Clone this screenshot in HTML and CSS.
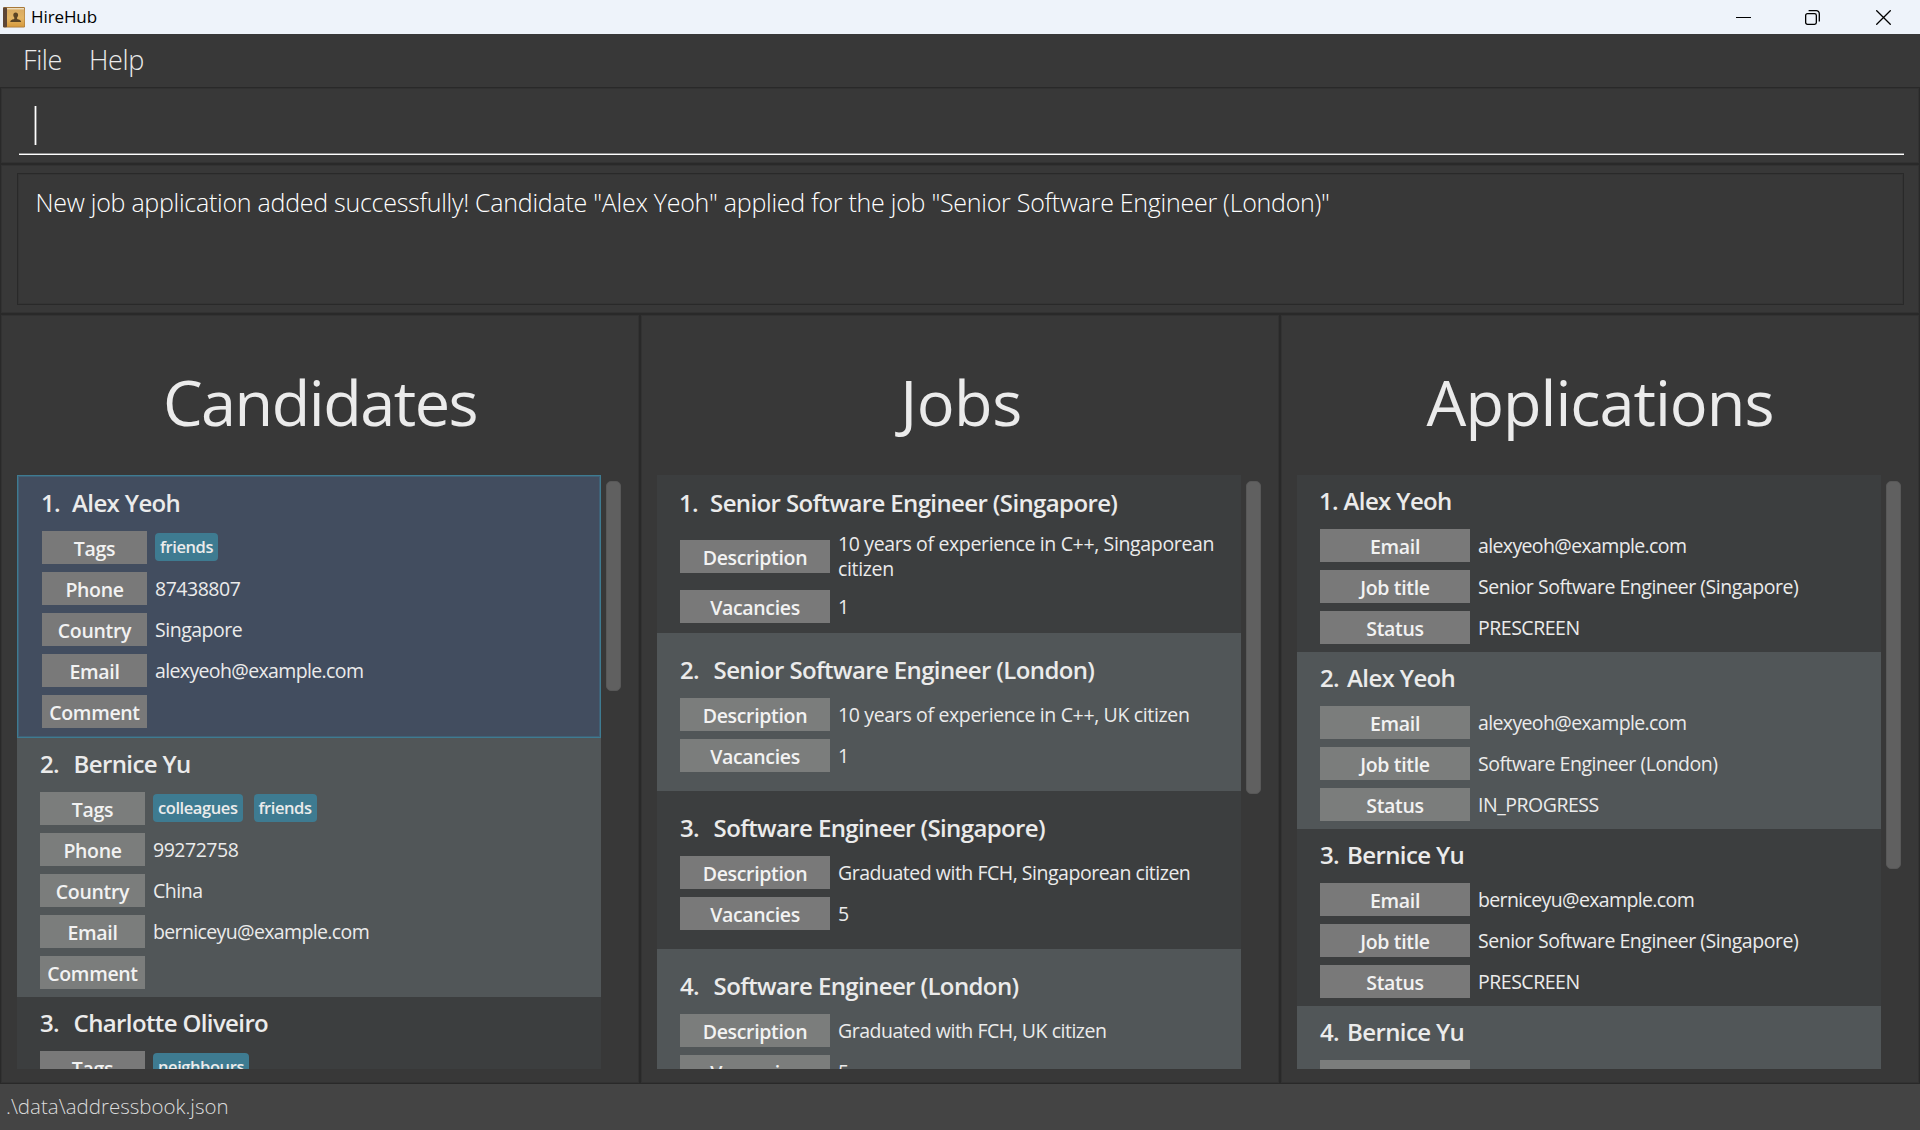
FILE: index.html
```html
<!DOCTYPE html>
<html lang="en">
<head>
<meta charset="utf-8">
<title>HireHub</title>
<link rel="stylesheet" href="styles.css">
</head>
<body>
<div class="window">
  <header class="titlebar">
    <svg class="app-icon" width="22" height="21" viewBox="0 0 22 21">
      <defs>
        <linearGradient id="cover" x1="0" y1="0" x2="0" y2="1">
          <stop offset="0" stop-color="#d9ab62"/>
          <stop offset=".5" stop-color="#e3b565"/>
          <stop offset="1" stop-color="#d79a3c"/>
        </linearGradient>
      </defs>
      <rect x="0" y="0" width="22" height="20.5" rx="1.2" fill="#a8793a"/>
      <rect x="4" y="1" width="17" height="2" fill="#ecdcbc"/>
      <rect x="4" y="2.4" width="17.4" height="17.3" fill="url(#cover)"/>
      <rect x="0" y="0.6" width="4" height="19.6" rx="1" fill="#5d4636"/>
      <path d="M12.7 5.4c1.6 0 2.4 1.1 2.4 2.6 0 1.200-.5 2-1 2.600v1.300c1.600.5 4 .9 4 3.100H7.300c0-2.200 2.400-2.600 4-3.100v-1.300c-.5-.6-1-1.400-1-2.600 0-1.500.8-2.600 2.400-2.600z" fill="#5b4424"/>
    </svg>
    <span class="app-name">HireHub</span>
    <div class="controls">
      <svg width="15" height="15" viewBox="0 0 15 15"><path d="M0 7.500H15" stroke="#000" fill="none"/></svg>
      <svg width="15" height="15" viewBox="0 0 15 15"><g fill="none" stroke="#000" stroke-width="1.300"><rect x=".65" y="3.650" width="10.700" height="10.700" rx="1.800"/><path d="M3.600.7H11.300a3 3 0 0 1 3 3V11.400"/></g></svg>
      <svg width="15" height="15" viewBox="0 0 15 15"><path d="M.3.300 14.700 14.700M14.700.300.3 14.700" stroke="#000" stroke-width="1.300" fill="none"/></svg>
    </div>
  </header>

  <nav class="menubar"><span>File</span><span>Help</span></nav>

  <section class="panel command"><div class="field"><i class="caret"></i></div></section>

  <section class="panel result"><div class="message">New job application added successfully! Candidate "Alex Yeoh" applied for the job "Senior Software Engineer (London)"</div></section>

  <main class="columns">
    <section class="panel column candidates">
      <h1>Candidates</h1>
      <div class="body">
        <div class="list">
          <article class="card selected">
            <h2><span>1.</span>Alex Yeoh</h2>
            <dl>
              <dt>Tags</dt><dd><b class="tag">friends</b></dd>
              <dt>Phone</dt><dd>87438807</dd>
              <dt>Country</dt><dd>Singapore</dd>
              <dt>Email</dt><dd class="mail">alexyeoh@example.com</dd>
              <dt>Comment</dt><dd></dd>
            </dl>
          </article>
          <article class="card">
            <h2><span>2.</span>Bernice Yu</h2>
            <dl>
              <dt>Tags</dt><dd><b class="tag">colleagues</b><b class="tag">friends</b></dd>
              <dt>Phone</dt><dd>99272758</dd>
              <dt>Country</dt><dd>China</dd>
              <dt>Email</dt><dd class="mail">berniceyu@example.com</dd>
              <dt>Comment</dt><dd></dd>
            </dl>
          </article>
          <article class="card">
            <h2><span>3.</span>Charlotte Oliveiro</h2>
            <dl>
              <dt>Tags</dt><dd><b class="tag">neighbours</b></dd>
            </dl>
          </article>
        </div>
        <div class="thumb"></div>
      </div>
    </section>

    <section class="panel column jobs">
      <h1>Jobs</h1>
      <div class="body">
        <div class="list">
          <article class="card">
            <h2><span>1.</span>Senior Software Engineer (Singapore)</h2>
            <dl>
              <dt>Description</dt><dd class="exp">10 years of experience in C++, Singaporean citizen</dd>
              <dt>Vacancies</dt><dd>1</dd>
            </dl>
          </article>
          <article class="card">
            <h2><span>2.</span>Senior Software Engineer (London)</h2>
            <dl>
              <dt>Description</dt><dd class="exp">10 years of experience in C++, UK citizen</dd>
              <dt>Vacancies</dt><dd>1</dd>
            </dl>
          </article>
          <article class="card">
            <h2><span>3.</span>Software Engineer (Singapore)</h2>
            <dl>
              <dt>Description</dt><dd>Graduated with FCH, Singaporean citizen</dd>
              <dt>Vacancies</dt><dd>5</dd>
            </dl>
          </article>
          <article class="card">
            <h2><span>4.</span>Software Engineer (London)</h2>
            <dl>
              <dt>Description</dt><dd>Graduated with FCH, UK citizen</dd>
              <dt>Vacancies</dt><dd>5</dd>
            </dl>
          </article>
        </div>
        <div class="thumb"></div>
      </div>
    </section>

    <section class="panel column applications">
      <h1>Applications</h1>
      <div class="body">
        <div class="list">
          <article class="card">
            <h2><span>1.</span>Alex Yeoh</h2>
            <dl>
              <dt>Email</dt><dd class="mail">alexyeoh@example.com</dd>
              <dt>Job title</dt><dd>Senior Software Engineer (Singapore)</dd>
              <dt>Status</dt><dd>PRESCREEN</dd>
            </dl>
          </article>
          <article class="card">
            <h2><span>2.</span>Alex Yeoh</h2>
            <dl>
              <dt>Email</dt><dd class="mail">alexyeoh@example.com</dd>
              <dt>Job title</dt><dd>Software Engineer (London)</dd>
              <dt>Status</dt><dd>IN_PROGRESS</dd>
            </dl>
          </article>
          <article class="card">
            <h2><span>3.</span>Bernice Yu</h2>
            <dl>
              <dt>Email</dt><dd class="mail">berniceyu@example.com</dd>
              <dt>Job title</dt><dd>Senior Software Engineer (Singapore)</dd>
              <dt>Status</dt><dd>PRESCREEN</dd>
            </dl>
          </article>
          <article class="card">
            <h2><span>4.</span>Bernice Yu</h2>
            <dl>
              <dt></dt><dd></dd>
            </dl>
          </article>
        </div>
        <div class="thumb"></div>
      </div>
    </section>
  </main>

  <footer class="statusbar">.\data\addressbook.json</footer>
</div>
</body>
</html>
```
FILE: styles.css
```css
* { box-sizing: border-box; }

body {
  margin: 0;
  background: #383838;
  color: #ebebeb;
  font-family: "Open Sans", "Noto Sans", sans-serif;
}

.window {
  display: flex;
  flex-direction: column;
  width: 1920px;
  height: 1130px;
  overflow: hidden;
}

.titlebar {
  display: flex;
  align-items: center;
  height: 34px;
  padding: 0 29px 0 3px;
  background: #eef3fa;
  color: #000;
}

.app-name {
  margin-left: 6px;
  font-size: 17px;
  line-height: 34px;
  letter-spacing: -0.1px;
}

.controls {
  display: flex;
  gap: 55px;
  margin-left: auto;
}

.controls svg:nth-child(2) { margin: 0 1px 0 -1px; }

.menubar {
  display: flex;
  gap: 27px;
  height: 53px;
  padding-left: 23px;
  font-size: 27px;
  font-weight: 300;
  line-height: 51px;
  letter-spacing: -0.4px;
}

.panel {
  border: 1px solid #292929;
  box-shadow: inset 0 0 0 1px #323232;
}

.command {
  height: 77px;
  padding: 8px 15px 0 18px;
}

.field {
  height: 59px;
  padding: 10px 0 0 15px;
  border-bottom: 1px solid #fff;
  box-shadow: inset 0 -1px #8e8e8e;
}

.caret {
  display: block;
  width: 3px;
  height: 39px;
  border: solid #848484;
  border-width: 0 1px;
  background: #fff;
}

.result {
  height: 150px;
  padding: 8px 15px 8px 16px;
}

.message {
  height: 132px;
  padding: 11px 16px 11px 17.500px;
  border: 1px solid #292929;
  box-shadow: inset 0 0 0 1px #343434;
  color: #fff;
  font-size: 25px;
  font-weight: 300;
  line-height: 34px;
  letter-spacing: -0.265px;
}

.columns {
  display: grid;
  grid-template-columns: repeat(3, 640px);
  height: 770px;
}

.column {
  height: 770px;
  padding-left: 16px;
}

h1 {
  height: 84px;
  margin: 45px 16px 31px 0;
  font-size: 63px;
  font-weight: 400;
  line-height: 84px;
  letter-spacing: -1px;
  text-align: center;
}

.candidates h1 { letter-spacing: -1.500px; }
.jobs h1 { padding-left: 2px; letter-spacing: -0.500px; }

.body {
  display: flex;
  gap: 5px;
}

.list {
  width: 584px;
  height: 594px;
  overflow: hidden;
}

.thumb {
  width: 15px;
  margin-top: 6px;
  border: 1px solid #585858;
  border-radius: 5px;
  background: #606060;
}

.candidates .thumb { height: 210px; }
.jobs .thumb { height: 313px; }
.applications .thumb { height: 388px; }

.card {
  padding: 0 17px 8px 23px;
  background: #3c3e3f;
}

.card:nth-child(even) { background: #515658; }

.card.selected {
  padding: 1px 17px 9px 24px;
  border: 1px solid #3e7b91;
  box-shadow: inset 0 0 0 1px #406076;
  background: #424d5f;
}

.jobs .card {
  display: flex;
  flex-direction: column;
  justify-content: center;
  height: 158px;
}

h2 {
  display: flex;
  gap: 14.500px;
  height: 51px;
  margin: 0 0 3px;
  font-size: 24px;
  font-weight: 600;
  line-height: 51px;
  letter-spacing: -0.62px;
  white-space: nowrap;
}

.applications h2 { gap: 8px; }
.card:first-child h2 span { margin: 0 -2.500px 0 -1px; }

dl {
  display: grid;
  grid-template-columns: 150px 1fr;
  align-items: center;
  gap: 8px;
  margin: 0;
}

.candidates dl { grid-template-columns: 105px 1fr; }

dt {
  height: 33px;
  padding-top: 1px;
  background: #797979;
  color: #f2f2f2;
  font-size: 19.5px;
  font-weight: 600;
  line-height: 33px;
  letter-spacing: -0.33px;
  text-align: center;
}

.card:nth-child(even) dt { background: #7b7d7c; }

dd {
  min-height: 33px;
  margin: 0;
  padding: 4px 0;
  font-size: 19.5px;
  line-height: 25px;
  letter-spacing: -0.48px;
}

.mail { letter-spacing: -0.63px; }
.exp { letter-spacing: -0.35px; }
.card:first-child .exp { padding: 0 0 1px; }

dd:has(.tag) {
  display: flex;
  gap: 11px;
  padding: 2px 0 3px;
}

.tag {
  height: 28px;
  padding: 0 5px;
  border-radius: 4px;
  background: #3e7b91;
  font-size: 16.5px;
  font-weight: 600;
  line-height: 28px;
  letter-spacing: -0.42px;
}

.statusbar {
  height: 46px;
  padding-left: 6px;
  background: #444;
  color: #dcdcdc;
  font-size: 20.5px;
  font-weight: 300;
  line-height: 45px;
}
```
